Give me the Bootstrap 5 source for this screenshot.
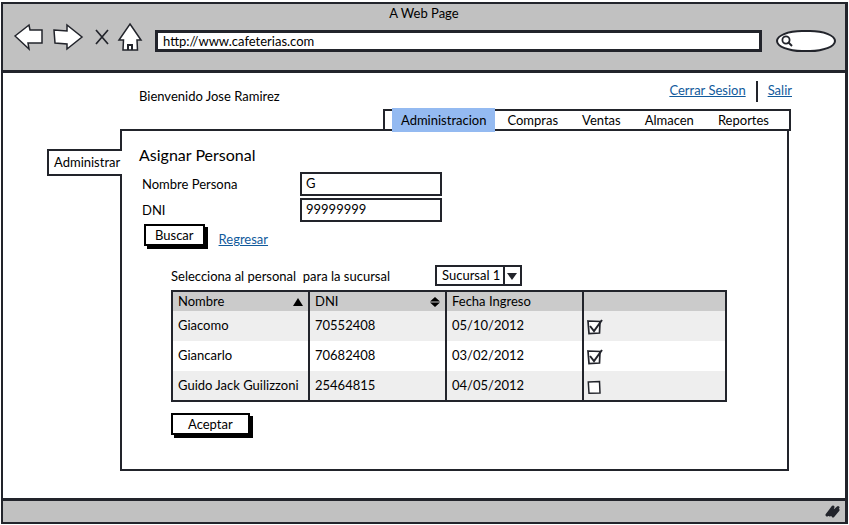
<!DOCTYPE html>
<html lang="es">
<head>
<meta charset="utf-8">
<meta name="viewport" content="width=device-width, initial-scale=1">
<title>Asignar Personal</title>
<link href="https://cdn.jsdelivr.net/npm/bootstrap@5.3.0/dist/css/bootstrap.min.css" rel="stylesheet">
<style>
  :root { --ink: #22242b; --chrome: #c1c1c1; }
  body { font-family: Lato, "Noto Sans", sans-serif; font-size: 13px; line-height: 20px; color: #000; background: #fff; }
  .page-frame { padding: 2px 1px 1px 1px; }
  .browser { min-height: calc(100vh - 3px); border: 2px solid var(--ink); border-right-width: 3px; }
  .chrome-top { background: var(--chrome); border-bottom: 3px solid var(--ink); padding-bottom: 18px; }
  .chrome-title { line-height: 18px; }
  .chrome-bar { padding: 0 9px 0 11px; }
  .tool { background: none; border: 0; padding: 0; line-height: 0; }
  .box { border: 2px solid var(--ink); background: #fff; border-radius: 0; color: #000; outline-offset: 1px; }
  .address { height: 22px; padding: 0 5px; border-width: 3px; margin: 8px 14px 0 12px; min-width: 0; }
  .finder { width: 60px; height: 22px; border-radius: 26px / 11px; margin-top: 8px; padding: 0 2px; overflow: hidden; }
  .finder input { border: 0; background: none; outline: 0; min-width: 0; padding: 0; }
  a { color: #115a9c; }
  .session { padding: 6px 53px 0 136px; }
  .welcome { padding-top: 7px; }
  .session-links a { line-height: 22px; }
  .session-rule { width: 2px; height: 21px; background: var(--ink); margin: 2px 10px 0; }
  .menu { z-index: 2; margin: 3px 54px -2px 0; height: 22px; padding: 0 8px 0 7px; }
  .menu a { color: #000; text-decoration: none; padding: 0 12px; line-height: 22px; }
  .menu .current { background: #94baf1; margin: -3px 0; padding: 1px 9px; line-height: 22px; }
  .work { padding: 0 56px 27px 44px; }
  .side-tab { z-index: 1; width: 75px; height: 27px; margin: 20px -2px 0 0; padding: 0 0 0 5px; border-right: 0; line-height: 23px; text-align: left; }
  .panel { padding: 14px 17px; }
  .panel-title { font-size: 16px; font-weight: 400; line-height: 20px; margin: 0 0 7px; }
  .field { padding-left: 3px; margin-bottom: 2px; }
  .field label { width: 158px; }
  .field input { width: 142px; height: 24px; padding: 0 4px 2px; }
  .push { height: 22px; padding: 0 9px; border: 2px solid #000; background: #fff; color: #000; line-height: 18px; box-shadow: 3px 3px 0 #000; }
  .push-wide { padding: 0 15px; }
  .actions { padding-left: 5px; gap: 14px; }
  .actions a { padding-top: 5px; }
  .staff { margin: 16px 43px 0 32px; }
  .branch { gap: 45px; margin-bottom: 4px; }
  .branch select { appearance: none; width: 87px; height: 21px; padding: 0 0 0 5px; line-height: 17px;
    background: #fff url("data:image/svg+xml,%3Csvg xmlns='http://www.w3.org/2000/svg' width='17' height='17'%3E%3Cpath d='M1 0v17' stroke='%2322242b' stroke-width='2'/%3E%3Cpath d='M4 6h10l-5 7z' fill='%2322242b'/%3E%3C/svg%3E") no-repeat right center; }
  .staff-table { width: 100%; table-layout: fixed; border: 2px solid var(--ink); border-collapse: collapse; }
  .staff-table th, .staff-table td { border: 0; border-left: 2px solid var(--ink); padding: 0 5px; vertical-align: top; }
  .staff-table th { font-weight: 400; background: #cbcbcb; height: 20px; line-height: 19px; }
  .staff-table td { height: 30px; padding-top: 4px; }
  .staff-table tbody tr:nth-child(odd) td { background: #eee; }
  .col-data { width: 137px; }
  .staff-table td.pick { padding: 7px 2px 0; line-height: 0; }
  .pick input { appearance: none; width: 17px; height: 17px; margin: 0;
    background: url("data:image/svg+xml,%3Csvg xmlns='http://www.w3.org/2000/svg' width='17' height='17'%3E%3Cpath d='M2.300 4L13.500 3.500 14 15 3 15.300z' fill='%23fff' stroke='%2322242b' stroke-width='1.500'/%3E%3C/svg%3E") no-repeat; }
  .pick input:checked {
    background-image: url("data:image/svg+xml,%3Csvg xmlns='http://www.w3.org/2000/svg' width='17' height='17'%3E%3Cpath d='M2 3L14 3.500 13.500 15 3 15.500z' fill='%23fff' stroke='%2322242b' stroke-width='1.700'/%3E%3Cpath d='M4 8L8 13 16 2' fill='none' stroke='%2322242b' stroke-width='2'/%3E%3C/svg%3E"); }
  .confirm { margin-top: 11px; }
  .chrome-bottom { height: 24px; background: var(--chrome); border-top: 3px solid var(--ink); padding: 2px 4px 0 0; line-height: 0; }
</style>
<script src="https://cdn.jsdelivr.net/npm/bootstrap@5.3.0/dist/js/bootstrap.bundle.min.js" defer></script>
</head>
<body>
<div class="page-frame">
<div class="browser d-flex flex-column">
  <header class="chrome-top">
    <div class="chrome-title text-center">A Web Page</div>
    <div class="chrome-bar d-flex align-items-center">
      <button class="tool" type="button" aria-label="Atrás"><svg width="30" height="28" viewBox="0 0 30 28"><path d="M1 13L15 2 16 7 28 7 28 20 14 20 15 26z" fill="#fff" stroke="#22242b" stroke-width="1.500"/></svg></button>
      <button class="tool ms-2" type="button" aria-label="Adelante"><svg width="32" height="28" viewBox="0 0 32 28"><path d="M2 7L15 8 15 2 30 14 15 26 15 21 3 20z" fill="#fff" stroke="#22242b" stroke-width="1.500"/></svg></button>
      <button class="tool ms-2" type="button" aria-label="Detener"><svg width="20" height="28" viewBox="0 0 20 28"><path d="M4 7L16 21M16 7L4 21" fill="none" stroke="#22242b" stroke-width="1.700"/></svg></button>
      <button class="tool ms-1" type="button" aria-label="Inicio"><svg width="27" height="30" viewBox="0 0 27 30"><path d="M14 2L25 18 21 18 21.500 28 7 28 7.500 18 3 18z" fill="#fff" stroke="#22242b" stroke-width="1.500"/><path d="M12 28V23H16V28" fill="none" stroke="#22242b" stroke-width="2"/></svg></button>
      <input class="box address flex-grow-1" type="text" aria-label="Dirección" value="http://www.cafeterias.com">
      <label class="box finder d-flex align-items-center"><svg class="flex-shrink-0" width="14" height="14" viewBox="0 0 14 14"><circle cx="6" cy="6" r="3.600" fill="none" stroke="#22242b" stroke-width="1.800"/><path d="M8 8L12 12" stroke="#22242b" stroke-width="2"/></svg><input class="w-100" type="search" aria-label="Buscar en la web"></label>
    </div>
  </header>

  <main class="flex-grow-1 d-flex flex-column">
    <div class="session d-flex justify-content-between">
      <div class="welcome">Bienvenido Jose Ramirez</div>
      <div class="session-links d-flex">
        <a href="#">Cerrar Sesion</a><span class="session-rule"></span><a href="#">Salir</a>
      </div>
    </div>
    <nav class="menu box position-relative align-self-end d-flex align-items-center" aria-label="Principal">
      <a class="current" href="#" aria-current="page">Administracion</a>
      <a href="#">Compras</a>
      <a href="#">Ventas</a>
      <a href="#">Almacen</a>
      <a href="#">Reportes</a>
    </nav>
    <div class="work flex-grow-1 d-flex">
      <button class="side-tab box position-relative flex-shrink-0" type="button">Administrar</button>
      <section class="panel box flex-grow-1">
        <h1 class="panel-title">Asignar Personal</h1>
        <form>
          <div class="field d-flex align-items-center"><label for="nombre">Nombre Persona</label><input class="box" id="nombre" type="text" value="G"></div>
          <div class="field d-flex align-items-center"><label for="dni">DNI</label><input class="box" id="dni" type="text" value="99999999"></div>
          <div class="actions d-flex align-items-start"><button class="push" type="button">Buscar</button><a href="#">Regresar</a></div>
        </form>
        <form class="staff">
          <div class="branch d-flex align-items-center">
            <label for="sucursal">Selecciona al personal&nbsp; para la sucursal</label>
            <select class="box" id="sucursal"><option>Sucursal 1</option></select>
          </div>
          <table class="staff-table">
            <colgroup><col class="col-data"><col class="col-data"><col class="col-data"><col></colgroup>
            <thead>
              <tr>
                <th scope="col"><div class="d-flex justify-content-between align-items-center">Nombre <svg width="10" height="8" viewBox="0 0 10 8"><path d="M5 0L10 8H0z"/></svg></div></th>
                <th scope="col"><div class="d-flex justify-content-between align-items-center">DNI <svg width="10" height="10" viewBox="0 0 10 10"><path d="M5 0L10 4.500H0zM0 5.500H10L5 10z"/></svg></div></th>
                <th scope="col">Fecha Ingreso</th>
                <th scope="col" aria-label="Seleccionar"></th>
              </tr>
            </thead>
            <tbody>
              <tr><td>Giacomo</td><td>70552408</td><td>05/10/2012</td><td class="pick"><input type="checkbox" aria-label="Giacomo" checked></td></tr>
              <tr><td>Giancarlo</td><td>70682408</td><td>03/02/2012</td><td class="pick"><input type="checkbox" aria-label="Giancarlo" checked></td></tr>
              <tr><td>Guido Jack Guilizzoni</td><td>25464815</td><td>04/05/2012</td><td class="pick"><input type="checkbox" aria-label="Guido Jack Guilizzoni"></td></tr>
            </tbody>
          </table>
          <button class="push push-wide confirm" type="button">Aceptar</button>
        </form>
      </section>
    </div>
  </main>

  <footer class="chrome-bottom text-end">
    <svg width="17" height="16" viewBox="0 0 17 16"><path d="M3 12L9 4 6 12 14 4.500M9 13L14 7" fill="none" stroke="#22242b" stroke-width="3" stroke-linecap="round" stroke-linejoin="round"/></svg>
  </footer>
</div>
</div>
</body>
</html>
